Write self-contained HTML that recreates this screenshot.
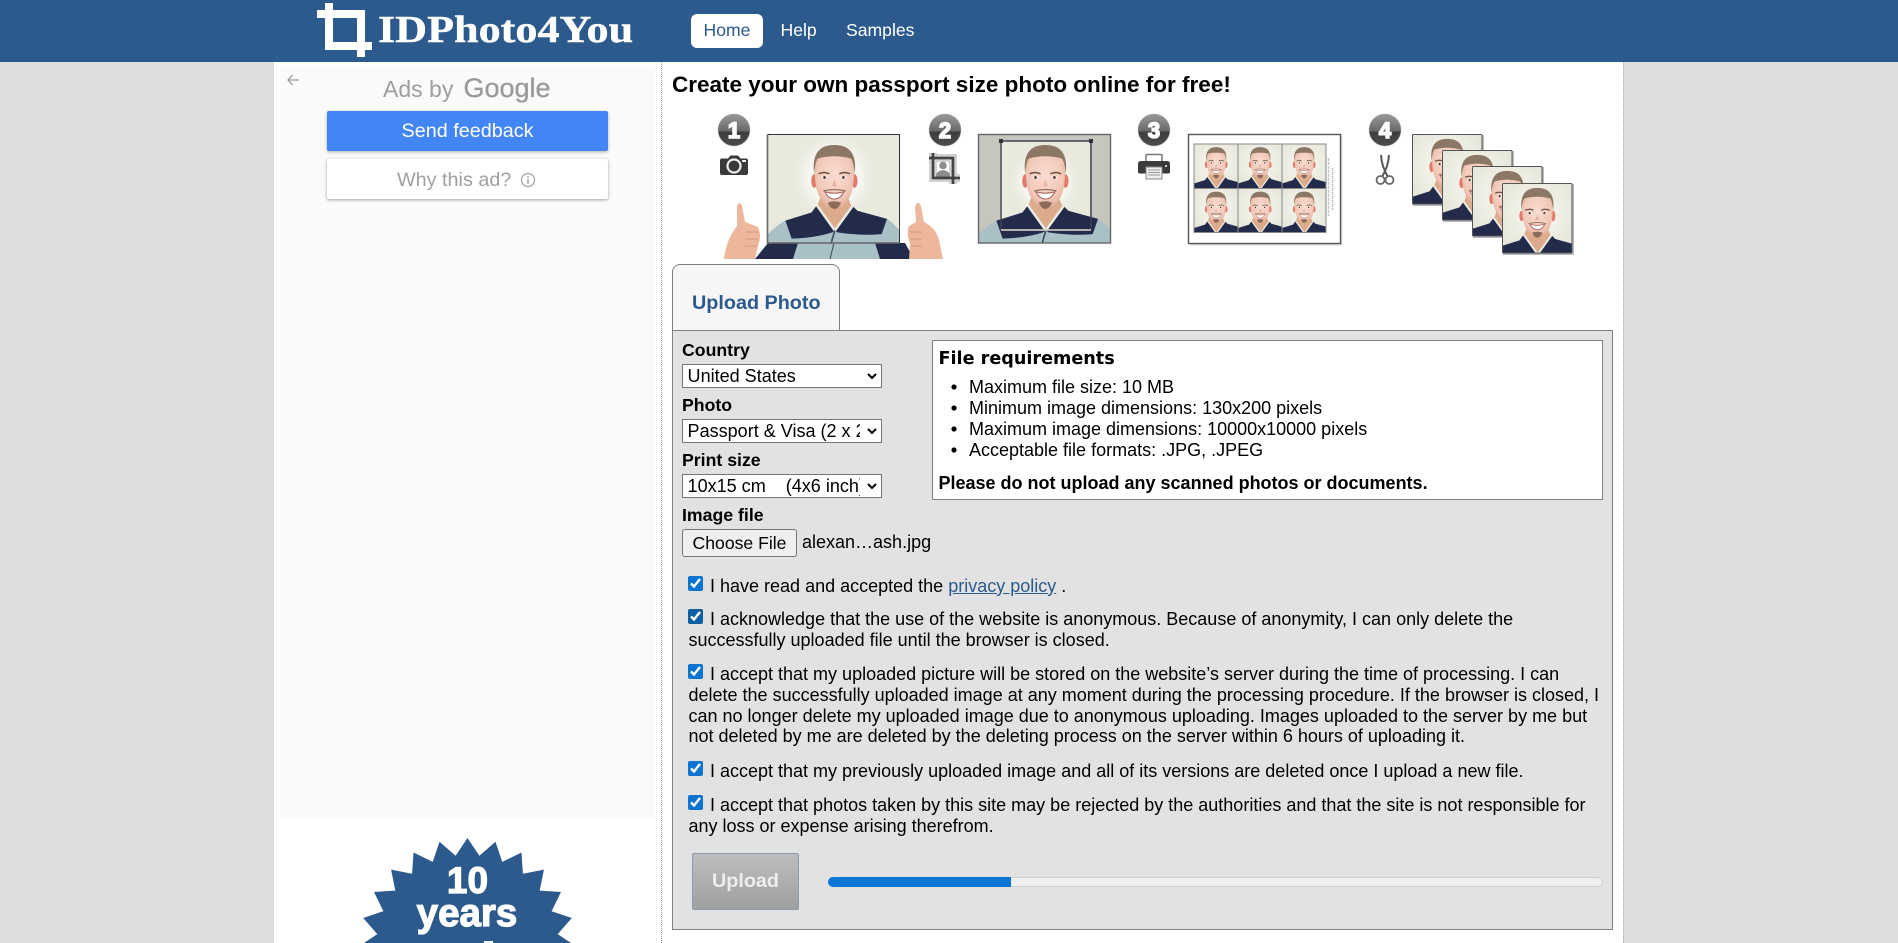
<!DOCTYPE html>
<html lang="en"><head><meta charset="utf-8"><title>IDPhoto4You</title>
<style>
html,body{margin:0;padding:0;width:1898px;height:943px;overflow:hidden;background:#dedede;font-family:"Liberation Sans",Arial,sans-serif;color:#000}
.a{position:absolute;white-space:nowrap}
#wrap{position:relative;width:1898px;height:943px;overflow:hidden}
.t{font-size:18px;line-height:21.2px}
.b{font-weight:bold;font-size:17.7px;line-height:21px}
.sel{position:absolute;left:620px;zoom:1.1;width:182px;height:22px;font-size:16.4px;font-family:"Liberation Sans",Arial,sans-serif;background:#fff;border:1px solid #767676;border-radius:0;margin:0;padding:0 4px 0 .5px}
input[type=checkbox]{position:absolute;left:688px;width:15px;height:15px;margin:0;accent-color:#0b74d0}
ul{margin:0;padding:0;list-style:none}
a{color:#2c5a8c}
</style></head><body><div id="wrap">

<!-- page -->
<div class="a" style="left:274px;top:0;width:1349px;height:943px;background:#fff"></div>
<div class="a" style="left:661px;top:62px;height:881px;border-left:1px dotted #999"></div>
<div class="a" style="left:1623px;top:62px;height:881px;border-left:1px dotted #aaa"></div>

<!-- nav -->
<div class="a" style="left:0;top:0;width:1898px;height:62px;background:#2c5a8c"></div>
<svg class="a" style="left:310px;top:0" width="70" height="62"><path d="M7 14H55M19 3V46H62M51 14V57" fill="none" stroke="#fff" stroke-width="8"/></svg>
<div class="a" style="left:378px;top:8px;font-family:'Liberation Serif',serif;font-weight:bold;font-size:38px;line-height:44px;color:#fff;transform:scaleX(1.162);transform-origin:0 0;-webkit-text-stroke:.4px #fff">IDPhoto4You</div>
<div class="a" style="left:691px;top:14px;width:72px;height:34px;background:#fff;border-radius:6px;text-align:center;font-size:17.6px;line-height:33px;color:#2c5a8c">Home</div>
<div class="a" style="left:780.500px;top:14px;font-size:17.6px;line-height:33px;color:#fff">Help</div>
<div class="a" style="left:846px;top:14px;font-size:17.6px;line-height:33px;color:#fff">Samples</div>

<!-- ad -->
<div class="a" style="left:280px;top:68px;width:375px;height:750px;background:#fafafa"></div>
<svg class="a" style="left:285px;top:73px" width="16" height="14"><path d="M14 7H3M7.500 2L3 7l4.500 5" fill="none" stroke="#9a9a9a" stroke-width="1.300"/></svg>
<div class="a" style="left:383px;top:75px;font-size:23px;line-height:28px;color:#9e9e9e">Ads by</div>
<div class="a" style="left:463.500px;top:72px;font-size:27px;line-height:32px;color:#9a9a9a;-webkit-text-stroke:.3px #9a9a9a">Google</div>
<div class="a" style="left:327px;top:111px;width:281px;height:40px;background:#4285f4;border-radius:2px;box-shadow:0 1px 3px rgba(0,0,0,.3);color:#fff;text-align:center;font-size:19.8px;line-height:40px">Send feedback</div>
<div class="a" style="left:327px;top:159px;width:281px;height:40px;background:#fff;border-radius:2px;box-shadow:0 1px 3px rgba(0,0,0,.35);color:#a0a0a0;font-size:19.8px;line-height:42px"><span style="position:absolute;left:70px">Why this ad?</span><svg style="position:absolute;left:193px;top:13px" width="16" height="16"><circle cx="8" cy="8" r="6.500" fill="none" stroke="#a0a0a0" stroke-width="1.300"/><path d="M8 7v5M8 4v1.600" stroke="#a0a0a0" stroke-width="1.500"/></svg></div>

<!-- badge -->
<svg class="a" style="left:340px;top:830px" width="260" height="113">
<polygon fill="#2c5a8c" points="127.5,8 139.4,25.8 155.45,11.7 162.3,31.9 181.5,22.5 182.9,43.8 203.9,39.6 199.7,60.6 221,62 211.6,81.2 231.8,88.05 217.7,104.1 235.5,116 19.5,116 37.3,104.1 23.2,88.05 43.4,81.2 34,62 55.3,60.6 51.1,39.6 72.1,43.8 73.5,22.5 92.7,31.9 99.55,11.7 115.6,25.8"/>
<text x="127.500" y="63" text-anchor="middle" font-family="Liberation Sans,sans-serif" font-weight="bold" font-size="37" fill="#fff" stroke="#fff" stroke-width="1.200">10</text>
<text x="127" y="96" text-anchor="middle" font-family="Liberation Sans,sans-serif" font-weight="bold" font-size="38.500" fill="#fff" stroke="#fff" stroke-width="1.200">years</text>
<rect x="144" y="111" width="9" height="2" fill="#fff"/>
</svg>

<!-- heading -->
<div class="a" style="left:672px;top:70.500px;font-weight:bold;font-size:22.500px;line-height:28px">Create your own passport size photo online for free!</div>

<!-- steps illustration -->
<svg class="a" style="left:0;top:0" width="1898" height="262" font-family="Liberation Sans,sans-serif">
<defs>
<radialGradient id="bg" cx="50%" cy="45%" r="60%"><stop offset="0" stop-color="#f8f8f3"/><stop offset=".6" stop-color="#eeeee4"/><stop offset="1" stop-color="#e6e6da"/></radialGradient>
<radialGradient id="glow"><stop offset="0" stop-color="#fbfbf7"/><stop offset=".6" stop-color="#f6f6ef"/><stop offset="1" stop-color="#e9e9de" stop-opacity="0"/></radialGradient>
<radialGradient id="skin" cx="50%" cy="42%" r="62%"><stop offset="0" stop-color="#f9dcd2"/><stop offset=".7" stop-color="#f2c9b9"/><stop offset="1" stop-color="#e2a892"/></radialGradient>
<linearGradient id="num" x1="0" y1="0" x2="0" y2="1"><stop offset="0" stop-color="#9a9a9a"/><stop offset=".54" stop-color="#686868"/><stop offset=".55" stop-color="#3c3c3c"/><stop offset="1" stop-color="#4c4c4c"/></linearGradient>
<g id="man">
<path d="M-30 140V113Q-16 97 -4 91L109 89Q122 98 130 112V140Z" fill="#a9c0c6"/>
<path d="M25 82L-4 91L3 111Q30 110 48 104L51 102L54 104Q80 108 103 106L109 89L76 80L70 74L51 102L31 74Z" fill="#222c4a"/>
<path d="M36 62H64L70 76L51 102L31 76Z" fill="#dcab8c"/>
<path d="M31 74L51 102L72 73" fill="none" stroke="#ecece4" stroke-width="2.800"/>
<path d="M51 102L48 112L43 136" fill="none" stroke="#3c4a5c" stroke-width="1.800"/>
<ellipse cx="28" cy="47" rx="3.200" ry="7.500" fill="#e07a6a"/><ellipse cx="73" cy="47" rx="3.200" ry="7.500" fill="#e07a6a"/>
<path d="M29 30Q29 14 50.500 14Q72 14 72 30Q74 60 62 73Q51 81 40 73Q27 60 29 30Z" fill="url(#skin)"/>
<path d="M28 39Q24 7 50.500 7Q77 7 73 39Q72 26 69 22Q50 17 32 22Q29 26 28 39Z" fill="#8b7763"/>
<path d="M33 39Q39 36 45 39M56 39Q62 36 68 39" fill="none" stroke="#6b5444" stroke-width="1.700"/>
<ellipse cx="39.500" cy="43" rx="3.400" ry="1.500" fill="#f6f1ee"/><ellipse cx="60.500" cy="43" rx="3.400" ry="1.500" fill="#f6f1ee"/>
<circle cx="39.500" cy="43" r="1.500" fill="#3a2c26"/><circle cx="60.500" cy="43" r="1.500" fill="#3a2c26"/>
<path d="M50.500 45L47.500 53H53.500Z" fill="#e8b5a4"/>
<path d="M40 59Q50.500 62 61 59Q57 67 50.500 67Q44 67 40 59Z" fill="#fff" stroke="#9c4d42" stroke-width="1"/>
<path d="M38 58Q50.500 55 63 58" fill="none" stroke="#8a6a58" stroke-width="1.200"/>
<path d="M43 71Q50.500 68 58 71Q55 78 50.500 78Q46 78 43 71Z" fill="#75584a" opacity=".8"/>
</g>
</defs>

<!-- step numbers -->
<g font-weight="bold" font-size="22" fill="#fff" text-anchor="middle" stroke="#fff" stroke-width="1.500">
<circle cx="734" cy="130" r="16" fill="url(#num)" stroke="#aaa" stroke-width=".6"/><text x="734" y="138">1</text>
<circle cx="945" cy="130" r="16" fill="url(#num)" stroke="#aaa" stroke-width=".6"/><text x="945" y="138">2</text>
<circle cx="1154" cy="130" r="16" fill="url(#num)" stroke="#aaa" stroke-width=".6"/><text x="1154" y="138">3</text>
<circle cx="1385" cy="130" r="16" fill="url(#num)" stroke="#aaa" stroke-width=".6"/><text x="1385" y="138">4</text>
</g>

<!-- camera -->
<path d="M722 158.500H728L730.500 155.500H738L740.500 158.500H746Q748 158.500 748 160.500V173Q748 175 746 175H722Q720 175 720 173V160.500Q720 158.500 722 158.500Z" fill="#3a3a3a"/>
<circle cx="734" cy="166" r="6.500" fill="#3a3a3a" stroke="#eee" stroke-width="2.200"/><rect x="742" y="160" width="4" height="2" fill="#eee"/>

<!-- crop icon -->
<path d="M929 158H953V184M933 153V178H960" fill="none" stroke="#a5a5a5" stroke-width="7"/>
<path d="M929 158H953V184M933 153V178H960" fill="none" stroke="#fff" stroke-width="5"/>
<path d="M929 158H953V184M933 153V178H960" fill="none" stroke="#444" stroke-width="3"/>
<circle cx="943" cy="165.500" r="3.800" fill="#8d8d8d"/><path d="M936 176.500Q936 171 943 170Q950 171 950 176.500Z" fill="#8d8d8d"/>

<!-- printer -->
<rect x="1146" y="154.500" width="16" height="8" rx="1" fill="#fff" stroke="#777" stroke-width="1.500"/>
<path d="M1141 161H1167Q1170 161 1170 164V172Q1170 173.500 1168 173.500H1140Q1138 173.500 1138 172V164Q1138 161 1141 161Z" fill="#3a3a3a"/>
<rect x="1146" y="167" width="16" height="12" fill="#eee" stroke="#888"/><path d="M1148 170H1160M1148 172.500H1160M1148 175H1160" stroke="#999"/>
<circle cx="1166" cy="166" r="1" fill="#fff"/>

<!-- scissors -->
<path d="M1381 155Q1381.500 166 1388 177M1389 155Q1388.500 166 1382 177" fill="none" stroke="#555" stroke-width="2"/>
<circle cx="1380.500" cy="180" r="4" fill="#fff" stroke="#666" stroke-width="1.800"/><circle cx="1389.500" cy="180" r="4" fill="#fff" stroke="#666" stroke-width="1.800"/>

<!-- image 1 -->
<rect x="793" y="243" width="87" height="16" fill="#a9c0c6"/>
<path d="M755 259L768 243H798L793 259Z" fill="#222c4a"/><path d="M875 243H905L914 259H880Z" fill="#222c4a"/>
<line x1="834" y1="243" x2="830" y2="259" stroke="#3c4a5c"/>
<svg x="767" y="134" width="133" height="109" viewBox="-24.400 -5.200 147.800 121"><rect x="-24.400" y="-5.200" width="147.800" height="121" fill="#e9e9de"/><ellipse cx="50" cy="42" rx="50" ry="52" fill="url(#glow)"/><use href="#man"/></svg>
<path d="M767.500 134.500H899.500V243" fill="none" stroke="#333"/><path d="M767.500 134.500V243H899.500" fill="none" stroke="#666" stroke-width="1.600"/>
<path d="M737 206Q740 200 742 206L745 222L758 227Q762 235 758 246L755 259H724Q726 240 737 226Z" fill="#ecb79b"/>
<path d="M745 232H758M745 239H758M745 246H757" stroke="#d49a7c" fill="none"/>
<path d="M915 207Q918 199 921 206L924 222Q936 228 939 240L943 259H909L910 244Q906 232 909 226L916 222Z" fill="#ecb79b"/>
<path d="M910 232H922M910 239H922M911 246H922" stroke="#d49a7c" fill="none"/>

<!-- image 2 -->
<svg x="978" y="134" width="133" height="109" viewBox="-24.400 -5.200 147.800 121"><rect x="-24.400" y="-5.200" width="147.800" height="121" fill="#c6c6bc"/><rect x="0" y="2.500" width="100" height="99" fill="#e9e9de"/><ellipse cx="50" cy="48" rx="42" ry="42" fill="url(#glow)"/><use href="#man"/></svg>
<rect x="978.500" y="134.500" width="132" height="108.500" fill="none" stroke="#666" stroke-width="1.400"/>
<path d="M1001 230V141H1091V230" fill="none" stroke="#3f4250" stroke-width="1.500"/><path d="M1001 230H1091" stroke="#c9c4bb" stroke-width="1.800"/>
<rect x="999" y="139" width="4" height="4" fill="#333"/><rect x="1089" y="139" width="4" height="4" fill="#333"/>

<!-- image 3 -->
<rect x="1190" y="136" width="152.500" height="109.500" fill="#bbb" opacity=".55"/>
<rect x="1188.500" y="134.500" width="152" height="109" fill="#fff" stroke="#555" stroke-width="1.400"/>
<svg x="1194" y="144" width="44" height="44" viewBox="0 0 100 100"><rect width="100" height="100" fill="url(#bg)"/><use href="#man"/></svg>
<svg x="1238" y="144" width="44" height="44" viewBox="0 0 100 100"><rect width="100" height="100" fill="url(#bg)"/><use href="#man"/></svg>
<svg x="1282" y="144" width="44" height="44" viewBox="0 0 100 100"><rect width="100" height="100" fill="url(#bg)"/><use href="#man"/></svg>
<svg x="1194" y="188.500" width="44" height="44" viewBox="0 0 100 100"><rect width="100" height="100" fill="url(#bg)"/><use href="#man"/></svg>
<svg x="1238" y="188.500" width="44" height="44" viewBox="0 0 100 100"><rect width="100" height="100" fill="url(#bg)"/><use href="#man"/></svg>
<svg x="1282" y="188.500" width="44" height="44" viewBox="0 0 100 100"><rect width="100" height="100" fill="url(#bg)"/><use href="#man"/></svg>
<path d="M1194 144H1326V232.500H1194ZM1238 144V232.500M1282 144V232.500M1194 188.500H1326" fill="none" stroke="#8a8a8a"/>
<path d="M1328.500 158V216M1332.500 168V210" stroke="#c2c2c2" stroke-width="1.500" stroke-dasharray="3 1"/>

<!-- stack -->
<g>
<rect x="1413" y="135" width="71" height="71" fill="#bbb"/>
<svg x="1412" y="134" width="70" height="70" viewBox="0 0 100 100"><rect width="100" height="100" fill="url(#bg)"/><use href="#man"/></svg>
<rect x="1412.500" y="134.500" width="69.500" height="69.500" rx="1" fill="none" stroke="#555"/>
<rect x="1443" y="151" width="71" height="71" fill="#bbb"/>
<svg x="1442" y="150" width="70" height="70" viewBox="0 0 100 100"><rect width="100" height="100" fill="url(#bg)"/><use href="#man"/></svg>
<rect x="1442.500" y="150.500" width="69.500" height="69.500" rx="1" fill="none" stroke="#555"/>
<rect x="1473" y="167" width="71" height="71" fill="#bbb"/>
<svg x="1472" y="166" width="70" height="70" viewBox="0 0 100 100"><rect width="100" height="100" fill="url(#bg)"/><use href="#man"/></svg>
<rect x="1472.500" y="166.500" width="69.500" height="69.500" rx="1" fill="none" stroke="#555"/>
<rect x="1503" y="184" width="71" height="71" fill="#bbb"/>
<svg x="1502" y="183" width="70" height="70" viewBox="0 0 100 100"><rect width="100" height="100" fill="url(#bg)"/><use href="#man"/></svg>
<rect x="1502.500" y="183.500" width="69.500" height="69.500" rx="1" fill="none" stroke="#555"/>
</g>
</svg>

<!-- panel -->
<div class="a" style="left:672px;top:264px;width:166px;height:66px;background:#f6f6f6;border:1px solid #808080;border-bottom:0;border-radius:8px 8px 0 0"></div>
<div class="a" style="left:672px;top:330px;width:939px;height:598px;background:#e2e2e2;border:1px solid #808080"></div>
<div class="a" style="left:692px;top:290.500px;font-weight:bold;font-size:19.8px;line-height:24px;color:#2c5a8c">Upload Photo</div>

<!-- form -->
<div class="a b" style="left:682px;top:340px">Country</div>
<select class="sel" style="top:331px"><option>United States</option></select>
<div class="a b" style="left:682px;top:395px">Photo</div>
<select class="sel" style="top:381px"><option>Passport &amp; Visa (2 x 2 inch)</option></select>
<div class="a b" style="left:682px;top:450px">Print size</div>
<select class="sel" style="top:431px"><option>10x15 cm &nbsp;&nbsp; (4x6 inch)</option></select>
<div class="a b" style="left:682px;top:505px">Image file</div>
<div class="a" style="left:682px;top:529px;width:113px;height:26px;background:#efefef;border:1px solid #767676;border-radius:3px;text-align:center;font-size:17.6px;line-height:27px">Choose File</div>
<div class="a t" style="left:802px;top:532px">alexan…ash.jpg</div>

<!-- requirements -->
<div class="a" style="left:932px;top:340px;width:669px;height:158px;background:#fff;border:1px solid #808080"></div>
<div class="a" style="left:938.500px;top:348px;font-family:'DejaVu Sans',sans-serif;font-weight:bold;font-size:17.6px;line-height:22px">File requirements</div>
<ul>
<li class="a t" style="left:969px;top:377px">Maximum file size: 10 MB</li>
<li class="a t" style="left:969px;top:398px">Minimum image dimensions: 130x200 pixels</li>
<li class="a t" style="left:969px;top:419px">Maximum image dimensions: 10000x10000 pixels</li>
<li class="a t" style="left:969px;top:440px">Acceptable file formats: .JPG, .JPEG</li>
</ul>
<svg class="a" style="left:950px;top:380px" width="10" height="80" fill="#000"><circle cx="4" cy="7" r="2.600"/><circle cx="4" cy="28" r="2.600"/><circle cx="4" cy="49" r="2.600"/><circle cx="4" cy="70" r="2.600"/></svg>
<div class="a b" style="left:938.500px;top:472.500px;font-size:18px">Please do not upload any scanned photos or documents.</div>

<!-- agreements -->
<input type="checkbox" checked style="top:576px">
<div class="a t" style="left:710px;top:575.500px">I have read and accepted the <a href="#">privacy policy</a> .</div>
<input type="checkbox" checked style="top:609px;accent-color:#0d5f9f">
<div class="a t" style="left:710px;top:608.500px">I acknowledge that the use of the website is anonymous. Because of anonymity, I can only delete the</div>
<div class="a t" style="left:688.500px;top:630px">successfully uploaded file until the browser is closed.</div>
<input type="checkbox" checked style="top:664px">
<div class="a t" style="left:710px;top:663.500px">I accept that my uploaded picture will be stored on the website’s server during the time of processing. I can</div>
<div class="a t" style="left:688.500px;top:684.500px">delete the successfully uploaded image at any moment during the processing procedure. If the browser is closed, I</div>
<div class="a t" style="left:688.500px;top:705.500px">can no longer delete my uploaded image due to anonymous uploading. Images uploaded to the server by me but</div>
<div class="a t" style="left:688.500px;top:726px">not deleted by me are deleted by the deleting process on the server within 6 hours of uploading it.</div>
<input type="checkbox" checked style="top:761px">
<div class="a t" style="left:710px;top:760.500px">I accept that my previously uploaded image and all of its versions are deleted once I upload a new file.</div>
<input type="checkbox" checked style="top:795px">
<div class="a t" style="left:710px;top:794.500px">I accept that photos taken by this site may be rejected by the authorities and that the site is not responsible for</div>
<div class="a t" style="left:688.500px;top:816px">any loss or expense arising therefrom.</div>

<!-- upload -->
<div class="a" style="left:692px;top:853px;width:105px;height:55px;border:1px solid #8c9bb0;border-radius:2px;background:linear-gradient(#bdbdbd,#a0a0a0);color:#eee;font-weight:bold;font-size:19.8px;line-height:54px;text-align:center">Upload</div>
<div class="a" style="left:828px;top:877px;width:773px;height:8px;background:#efefef;border:1px solid #cfcfcf;border-radius:5px"></div>
<div class="a" style="left:828px;top:877px;width:183px;height:10px;background:#0675d3;border-radius:5px 0 0 5px"></div>

</div></body></html>
